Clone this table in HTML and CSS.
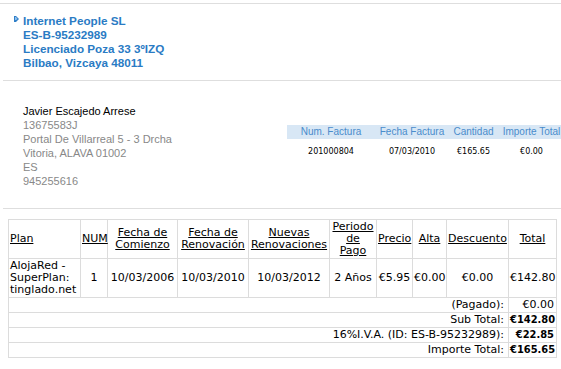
FILE: index.html
```html
<!DOCTYPE html>
<html lang="es">
<head>
    <meta charset="UTF-8">
    <meta name="viewport" content="width=device-width, initial-scale=1.0">
    <title>Factura 201000804</title>
    <link rel="stylesheet" href="styles.css">
</head>
<body>
<div class="rule rule-top"></div>

<!-- emisor -->
<div class="company row-box">
    <svg class="bullet" width="5" height="6" viewBox="0 0 5 6"><polygon points="0,0 2,0 5,3 2,6 0,6" fill="#2f7fc8"/><polygon points="1,1 2,1 3.5,3 2,4 1,4" fill="#8fc0ee"/></svg>
    <div class="col-box">
        <span>Internet People SL</span>
        <span>ES-B-95232989</span>
        <span>Licenciado Poza 33 3ºIZQ</span>
        <span>Bilbao, Vizcaya 48011</span>
    </div>
</div>

<div class="rule rule-mid"></div>

<!-- cliente + resumen -->
<div class="billing row-box">
    <div class="customer col-box flex0">
        <span class="name">Javier Escajedo Arrese</span>
        <span>13675583J</span>
        <span>Portal De Villarreal 5 - 3 Drcha</span>
        <span>Vitoria, ALAVA 01002</span>
        <span>ES</span>
        <span>945255616</span>
    </div>
    <div class="summary flex1">
        <table class="summary-table">
            <colgroup><col style="width:88px"><col style="width:74px"><col style="width:49px"><col style="width:67px"></colgroup>
            <tr class="head-tr">
                <th>Num. Factura</th>
                <th>Fecha Factura</th>
                <th>Cantidad</th>
                <th>Importe Total</th>
            </tr>
            <tr class="body-tr">
                <td>201000804</td>
                <td>07/03/2010</td>
                <td>€165.65</td>
                <td>€0.00</td>
            </tr>
        </table>
    </div>
</div>

<div class="rule rule-bottom"></div>

<!-- detalle -->
<table class="detail">
    <colgroup>
        <col style="width:72px"><col style="width:27px"><col style="width:70px"><col style="width:71px"><col style="width:81px">
        <col style="width:47px"><col style="width:36px"><col style="width:34px"><col style="width:62px"><col style="width:48px">
    </colgroup>
    <tr class="head-tr">
        <th class="left"><a href="#">Plan</a></th>
        <th><a href="#">NUM</a></th>
        <th><a href="#">Fecha de<br>Comienzo</a></th>
        <th><a href="#">Fecha de<br>Renovación</a></th>
        <th><a href="#">Nuevas<br>Renovaciones</a></th>
        <th><a href="#">Periodo<br>de<br>Pago</a></th>
        <th><a href="#">Precio</a></th>
        <th><a href="#">Alta</a></th>
        <th><a href="#">Descuento</a></th>
        <th><a href="#">Total</a></th>
    </tr>
    <tr class="body-tr">
        <td class="left">AlojaRed -<br>SuperPlan:<br>tinglado.net</td>
        <td>1</td>
        <td>10/03/2006</td>
        <td>10/03/2010</td>
        <td>10/03/2012</td>
        <td>2 Años</td>
        <td>€5.95</td>
        <td>€0.00</td>
        <td>€0.00</td>
        <td>€142.80</td>
    </tr>
    <tr class="sum-tr">
        <td class="label" colspan="9">(Pagado):</td>
        <td class="value">€0.00</td>
    </tr>
    <tr class="sum-tr">
        <td class="label" colspan="9">Sub Total:</td>
        <td class="value"><b>€142.80</b></td>
    </tr>
    <tr class="sum-tr">
        <td class="label" colspan="9">16%I.V.A. (ID: ES-B-95232989):</td>
        <td class="value"><b>€22.85</b></td>
    </tr>
    <tr class="sum-tr">
        <td class="label" colspan="9">Importe Total:</td>
        <td class="value"><b>€165.65</b></td>
    </tr>
</table>
</body>
</html>
```

FILE: styles.css
```css
html,body{margin: 0;padding: 0;background: #fff;}
body{font-family: "Liberation Sans", Arial, sans-serif;color: #000;overflow-x: hidden;}

.row-box{display: flex;flex-direction: row;flex-wrap: nowrap;}
.col-box{display: flex;flex-direction: column;flex-wrap: nowrap;}
.flex1{flex: 1 1 auto;}
.flex0{flex-shrink: 0;}

/* separadores */
.rule{border-top: 1px solid #dedede;height: 0;}
.rule-top{margin-top: 3px;}
.rule-mid{margin: 10px 0 0 3px;}
.rule-bottom{margin: 20px 0 0 3px;}

/* emisor */
.company{padding: 10px 0 0 14px;font-size: 11.7px;font-weight: bold;line-height: 14px;color: #2a7bc4;}
.company .bullet{margin: 2px 4px 0 0;flex-shrink: 0;}

/* cliente */
.billing{padding-left: 23px;}
.customer{width: 264px;padding-top: 23px;font-size: 11px;line-height: 14px;color: #888;}
.customer .name{color: #000;}

/* resumen factura */
.summary{margin-top: 44px;overflow: hidden;}
.summary-table{width: 278px;table-layout: fixed;border-collapse: collapse;}
.summary-table th{height: 14px;padding: 0;font-size: 10px;font-weight: normal;line-height: 14px;color: #4a8ccc;background: #d8e7f5;white-space: nowrap;text-align: center;}
.summary-table td{padding: 8px 0 0;font-family: "DejaVu Sans", Verdana, sans-serif;font-size: 8px;line-height: 10px;text-align: center;white-space: nowrap;}

/* detalle */
.detail{width: 548px;margin: 10px 0 0 8px;table-layout: fixed;border-collapse: collapse;font-family: "DejaVu Sans", Verdana, sans-serif;font-size: 11px;line-height: 12px;}
.detail th,.detail td{border: 1px solid #dcdcdc;padding: 1px;text-align: center;vertical-align: middle;font-weight: normal;white-space: nowrap;}
.detail .left{text-align: left;}
.detail a{color: #000;text-decoration: underline;}
.detail .sum-tr td{padding: 1px 2px 1px 1px;text-align: right;}
.detail .sum-tr .label{padding-right: 4px;}
.detail b{font-family: "DejaVu Sans Condensed", "DejaVu Sans", sans-serif;font-weight: bold;}
```
